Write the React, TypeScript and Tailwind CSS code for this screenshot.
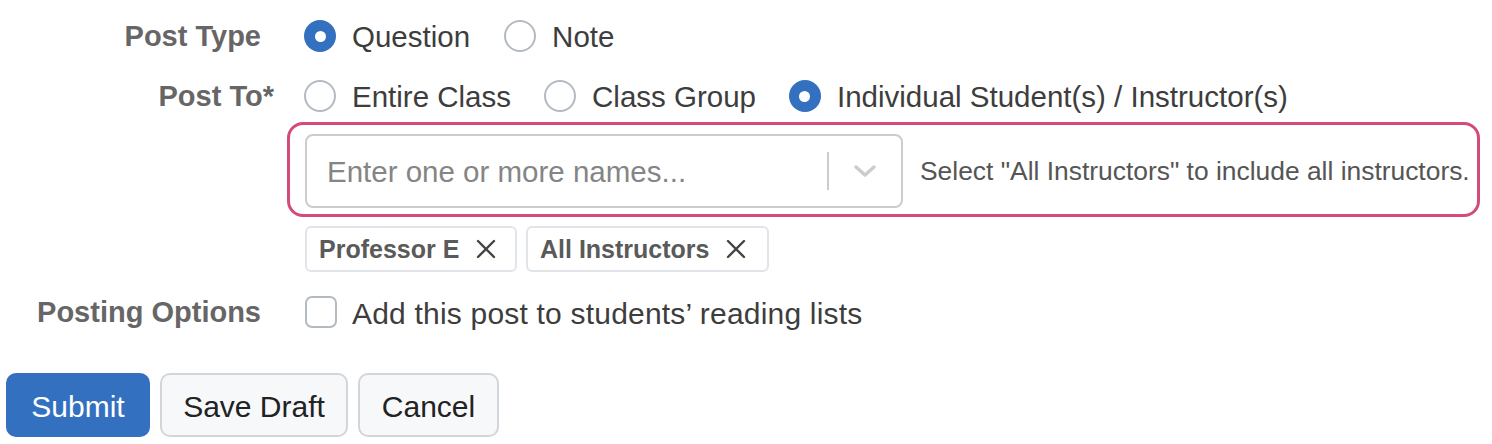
import React from "react";

function Radio({ checked }: { checked?: boolean }) {
  return checked ? (
    <span className="flex h-[32px] w-[32px] shrink-0 items-center justify-center rounded-full bg-[#3470c0]">
      <span className="h-[11px] w-[11px] rounded-full bg-white" />
    </span>
  ) : (
    <span className="h-[32px] w-[32px] shrink-0 rounded-full border-2 border-[#b4bac1] bg-white" />
  );
}

function Option({ checked, label, className }: { checked?: boolean; label: string; className?: string }) {
  return (
    <label className={"flex items-center " + (className ?? "")}>
      <Radio checked={checked} />
      <span className="ml-[16px] whitespace-nowrap pt-[2px] text-[29.5px] text-[#3d3d3d]">{label}</span>
    </label>
  );
}

function Tag({ label, className }: { label: string; className?: string }) {
  return (
    <span className={"flex h-[46px] items-center rounded-[6px] border-2 border-[#e1e4e8] bg-white pl-[12px] " + (className ?? "")}>
      <span className="whitespace-nowrap pt-[2px] text-[25px] font-bold text-[#5a5a5a]">{label}</span>
      <svg className="ml-[16px]" width="22" height="22" viewBox="0 0 22 22" fill="none" stroke="#444" strokeWidth="2.4" strokeLinecap="round">
        <path d="M3 3 L19 19 M19 3 L3 19" />
      </svg>
    </span>
  );
}

export default function App() {
  return (
    <div className="h-[444px] w-[1492px] overflow-hidden bg-white pt-[16px] font-['Liberation_Sans',Arial,sans-serif]">
      <div className="flex h-[40px] items-center">
        <div className="w-[261px] whitespace-nowrap pt-[2px] text-right text-[29px] font-bold text-[#666]">Post Type</div>
        <div className="ml-[43px] flex items-center">
          <Option checked label="Question" />
          <Option label="Note" className="ml-[34px]" />
        </div>
      </div>

      <div className="mt-[20px] flex h-[40px] items-center">
        <div className="w-[261px] whitespace-nowrap pt-[2px] text-right text-[29px] font-bold text-[#666]">
          Post To<span className="-mr-[13px]">*</span>
        </div>
        <div className="ml-[43px] flex items-center">
          <Option label="Entire Class" />
          <Option label="Class Group" className="ml-[33px]" />
          <Option checked label="Individual Student(s) / Instructor(s)" className="ml-[33px]" />
        </div>
      </div>

      <div className="mt-[6px] pl-[287px]">
        <div className="flex w-[1193px] items-center rounded-[16px] border-[3px] border-[#d44a79] pb-[6px] pl-[15px] pt-[9px]">
          <div className="flex h-[74px] w-[598px] items-center rounded-[8px] border-2 border-[#cccccc] bg-white">
            <span className="flex-1 whitespace-nowrap pl-[20px] pt-[2px] text-[29.5px] text-[#858585]">Enter one or more names...</span>
            <span className="h-[38px] w-[2px] bg-[#cccccc]" />
            <span className="flex w-[72px] items-center justify-center">
              <svg width="24" height="14" viewBox="0 0 24 14" fill="none" stroke="#cccccc" strokeWidth="3.5" strokeLinecap="round" strokeLinejoin="round">
                <path d="M3 3 L12 11 L21 3" />
              </svg>
            </span>
          </div>
          <span className="ml-[17px] whitespace-nowrap pt-[1px] text-[26.4px] text-[#555]">Select "All Instructors" to include all instructors.</span>
        </div>
      </div>

      <div className="mt-[9px] flex pl-[305px]">
        <Tag label="Professor E" className="w-[212px]" />
        <Tag label="All Instructors" className="ml-[9px] w-[243px]" />
      </div>

      <div className="mt-[24px] flex h-[32px] items-center">
        <div className="w-[261px] whitespace-nowrap pt-[2px] text-right text-[29px] font-bold text-[#666]">Posting Options</div>
        <div className="ml-[44px] flex items-center">
          <span className="h-[32px] w-[32px] rounded-[7px] border-2 border-[#b4bac1] bg-white" />
          <span className="ml-[15px] whitespace-nowrap pt-[2px] text-[30px] tracking-[0.2px] text-[#3d3d3d]">Add this post to students’ reading lists</span>
        </div>
      </div>

      <div className="mt-[45px] flex pl-[6px]">
        <button className="flex h-[64px] w-[144px] items-center justify-center rounded-[10px] bg-[#3470c0] pt-[2px] text-[30px] text-white">Submit</button>
        <button className="ml-[10px] flex h-[64px] w-[188px] items-center justify-center rounded-[10px] border-2 border-[#d2d6db] bg-[#f7f8fa] pt-[2px] text-[30px] text-[#222]">Save Draft</button>
        <button className="ml-[10px] flex h-[64px] w-[141px] items-center justify-center rounded-[10px] border-2 border-[#d2d6db] bg-[#f7f8fa] pt-[2px] text-[30px] text-[#222]">Cancel</button>
      </div>
    </div>
  );
}
